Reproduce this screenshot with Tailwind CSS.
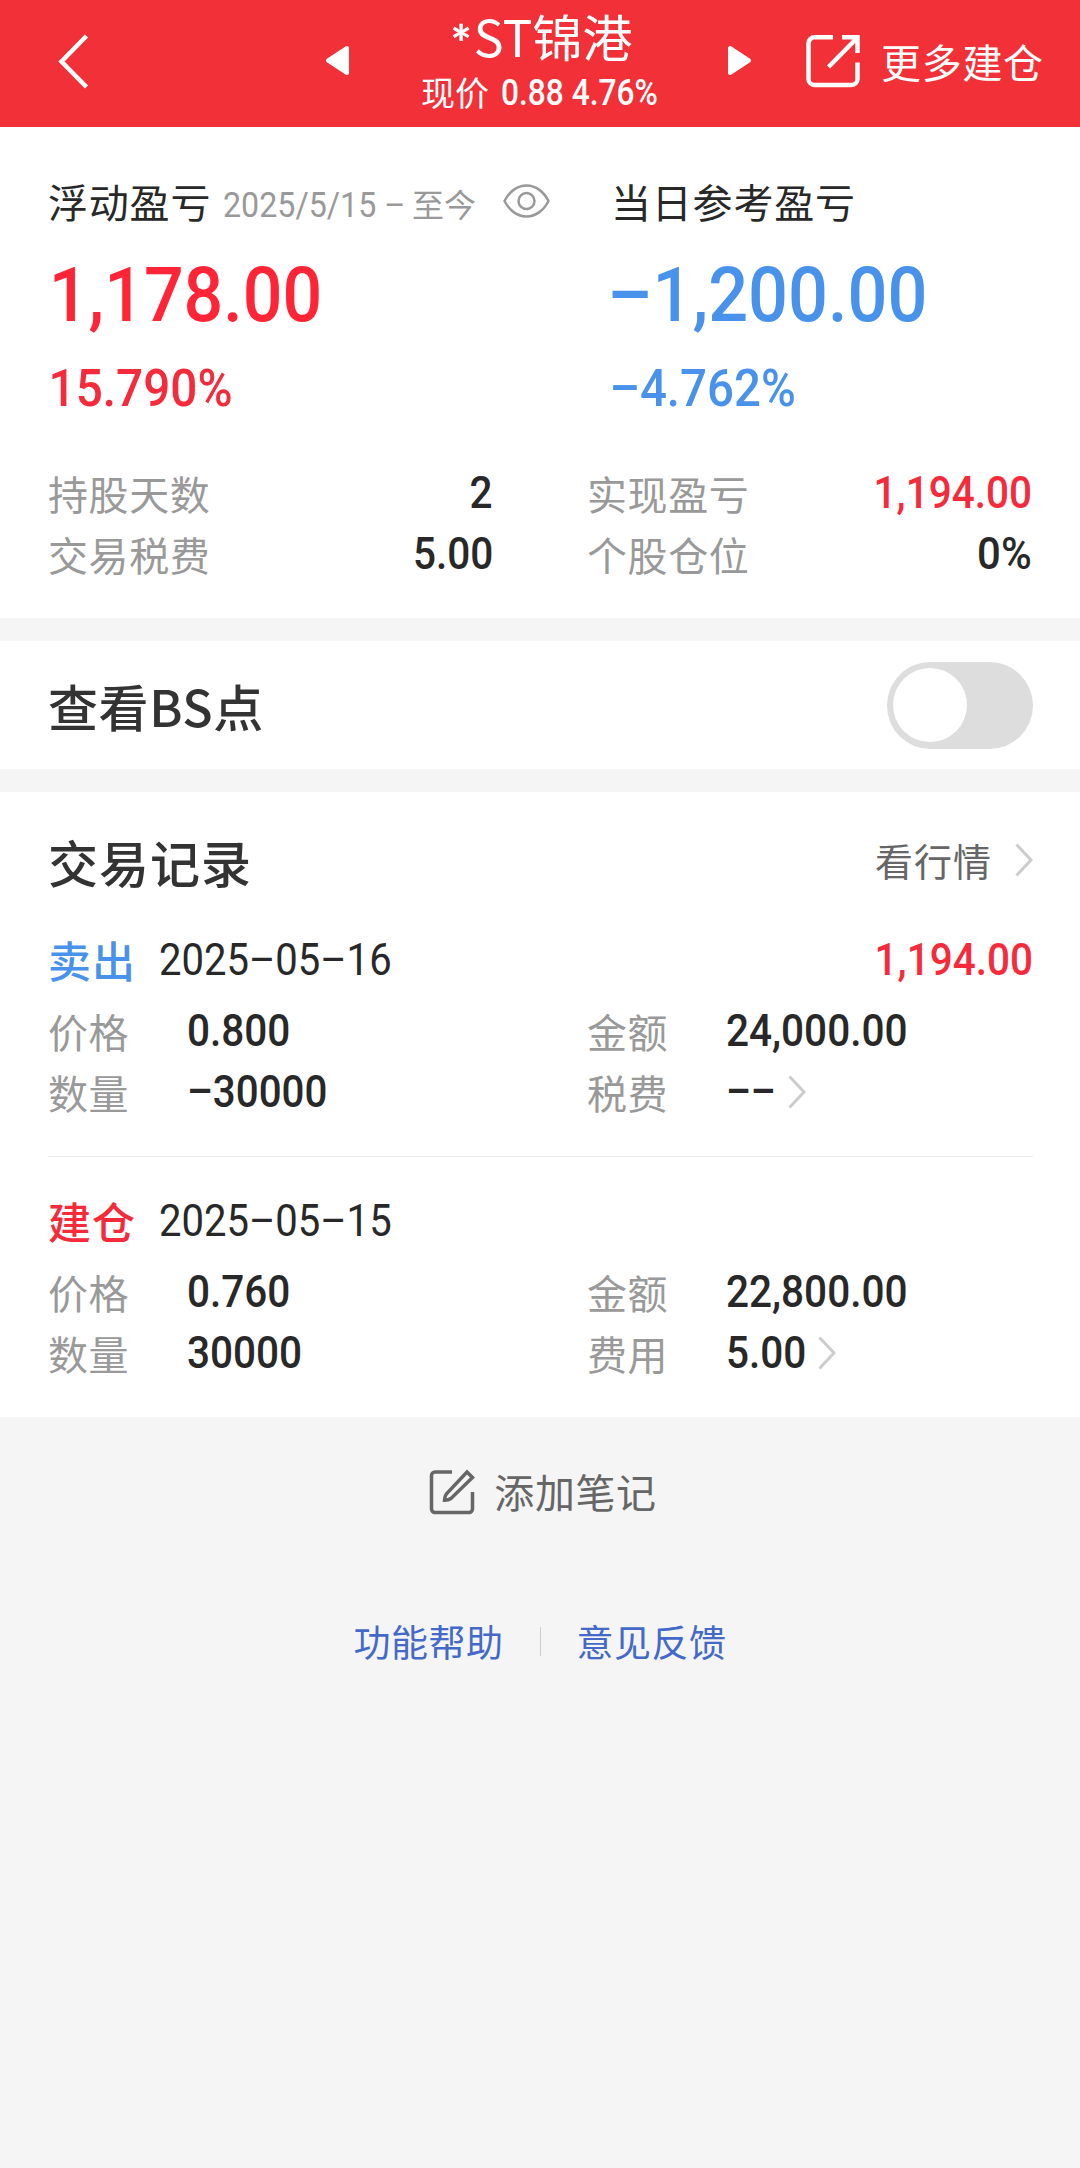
<!DOCTYPE html>
<html lang="zh-CN">
<head>
    <meta charset="UTF-8">
    <title>*ST锦港</title>
    <script src="https://cdn.jsdelivr.net/npm/@tailwindcss/browser@4"></script>
</head>
<body class="bg-[#f5f5f5] font-['Noto_Sans_CJK_SC',sans-serif] text-[40px] leading-none text-[#282828]">

<header class="h-[127px] bg-[#f23037] text-white flex items-center">
    <svg class="ml-[57px] -mt-1.5 w-8 h-14" viewBox="0 0 32 56" fill="none" stroke="currentColor" stroke-width="4.5"><path d="M29.500 3 4.500 28.500l25 25.500"/></svg>
    <svg class="ml-[236px] -mt-2 w-6 h-8" viewBox="0 0 24 32" fill="currentColor" stroke="currentColor" stroke-width="4" stroke-linejoin="round"><path d="M22 4v25L3 16.500z"/></svg>
    <div class="w-[379px] h-full flex flex-col items-center">
        <h1 class="mt-2.5 h-[51px] leading-[51px] text-[50px] pl-1.5 flex"><span class="font-['Lato'] text-[50px] font-black pt-2 mr-0.5">*</span>ST锦港</h1>
        <p class="h-[62px] leading-[62px] text-[34px] flex items-center whitespace-nowrap">现价<span class="ml-3 mt-0.5 font-['Roboto'] font-medium text-[36px] inline-block scale-x-[0.88] origin-left w-[155px]">0.88 4.76%</span></p>
    </div>
    <svg class="-mt-2 w-6 h-8" viewBox="0 0 24 32" fill="currentColor" stroke="currentColor" stroke-width="4" stroke-linejoin="round"><path d="M2 4v25l19-12.500z"/></svg>
    <svg class="ml-[53px] -mt-1.5 w-14 h-14" viewBox="0 0 56 56" fill="none" stroke="currentColor" stroke-width="4.500"><path d="M28 4.300H9.500a6 6 0 0 0-6 6V46a6 6 0 0 0 6 6h37a6 6 0 0 0 6-6V29.500M37 4.300h15.500V20M52 5 23.500 34"/></svg>
    <span class="ml-5 -mt-1.5 tracking-[0.7px]">更多建仓</span>
</header>

<section class="h-[491px] bg-white">
    <div class="flex h-[149px] pt-[50px]">
        <div class="w-[564px] pl-12 flex h-12 items-center">
            <span class="tracking-[0.8px] w-[175px]">浮动盈亏</span>
            <span class="font-['Roboto'] text-[35px] text-[#999] w-[189px] mt-2 whitespace-nowrap inline-block scale-x-[0.92] origin-left">2025/5/15 –</span>
            <span class="text-[32px] text-[#999] mt-1">至今</span>
            <svg class="ml-auto mr-3.5 w-[47px] h-[34px]" viewBox="0 0 47 34" fill="none" stroke="#999" stroke-width="2.500"><path d="M1.500 17C6 8 14 1.500 23.500 1.500S41 8 45.500 17C41 26 33 32.500 23.500 32.500S6 26 1.500 17z"/><circle cx="23.500" cy="17" r="8"/></svg>
        </div>
        <span class="ml-[47px] h-12 leading-[48px] tracking-[0.8px]">当日参考盈亏</span>
    </div>
    <div class="flex -mt-[23px] h-[84px] items-center font-['Roboto'] font-medium text-[76px]">
        <span class="w-[562px] pl-[53px] text-[#ff2436] scale-x-[0.92] origin-left">1,178.00</span>
        <span class="pl-[49px] text-[#4892eb] scale-x-[0.925] origin-left">–1,200.00</span>
    </div>
    <div class="flex mt-[21px] h-[60px] items-center font-['Roboto'] font-medium text-[51px]">
        <span class="w-[562px] pl-[52px] text-[#f52b3b] scale-x-[0.935] origin-left">15.790%</span>
        <span class="pl-[51px] text-[#4892eb] scale-x-[0.93] origin-left">–4.762%</span>
    </div>
    <div class="mt-11 grid grid-cols-[445px_445px] gap-x-[94px] px-12 text-[#999] tracking-[0.6px]">
        <div class="h-[61px] flex items-center justify-between">持股天数<span class="font-['Roboto'] font-medium text-[45px] text-[#282828] tracking-normal scale-x-[0.9] origin-right">2</span></div>
        <div class="h-[61px] flex items-center justify-between">实现盈亏<span class="font-['Roboto'] font-medium text-[45px] text-[#f52b3b] tracking-normal scale-x-[0.9] origin-right">1,194.00</span></div>
        <div class="h-[61px] flex items-center justify-between">交易税费<span class="font-['Roboto'] font-medium text-[45px] text-[#282828] tracking-normal scale-x-[0.9] origin-right">5.00</span></div>
        <div class="h-[61px] flex items-center justify-between">个股仓位<span class="font-['Roboto'] font-medium text-[45px] text-[#282828] tracking-normal scale-x-[0.93] origin-right">0%</span></div>
    </div>
</section>

<section class="mt-[23px] h-32 bg-white flex items-center justify-between pl-12 pr-[47px]">
    <h2 class="text-[50px] font-medium text-[#333] tracking-[0.6px]">查看BS点</h2>
    <button type="button" class="w-[146px] h-[87px] rounded-full bg-[#ddd] pl-1.5 flex items-center"><span class="w-[74px] h-[74px] rounded-full bg-white"></span></button>
</section>

<section class="mt-[23px] h-[625px] bg-white pl-12 pr-[47px] pt-[37px]">
    <div class="h-16 flex items-center">
        <h2 class="text-[50px] font-medium text-[#333] tracking-[1px]">交易记录</h2>
        <span class="ml-auto -mt-0.5 text-[38px] text-[#666] tracking-[1px]">看行情</span>
        <svg class="ml-[23px] -mt-0.5 w-[18px] h-[34px]" viewBox="0 0 18 34" fill="none" stroke="#ccc" stroke-width="3"><path d="M1.500 1.500 16 17 1.500 32.500"/></svg>
    </div>

    <!-- 卖出 -->
    <div class="mt-[34px] h-16 flex items-center">
        <span class="w-[111px] text-[43px] font-medium text-[#4892eb] tracking-[1px]">卖出</span>
        <span class="font-['Roboto'] text-[45px] scale-x-[0.89] origin-left">2025–05–16</span>
        <span class="ml-auto font-['Roboto'] font-medium text-[45px] text-[#f52b3b] scale-x-[0.9] origin-right">1,194.00</span>
    </div>
    <div class="mt-[9px] grid grid-cols-[539px_1fr] text-[#999] tracking-[0.6px]">
        <div class="h-[61px] flex items-center"><span class="w-[139px]">价格</span><span class="font-['Roboto'] font-medium text-[45px] text-[#282828] tracking-normal scale-x-[0.9] origin-left">0.800</span></div>
        <div class="h-[61px] flex items-center"><span class="w-[139px]">金额</span><span class="font-['Roboto'] font-medium text-[45px] text-[#282828] tracking-normal scale-x-[0.9] origin-left">24,000.00</span></div>
        <div class="h-[61px] flex items-center"><span class="w-[139px]">数量</span><span class="font-['Roboto'] font-medium text-[45px] text-[#282828] tracking-normal scale-x-[0.895] origin-left">–30000</span></div>
        <div class="h-[61px] flex items-center"><span class="w-[139px]">税费</span><span class="w-[62px] font-['Roboto'] font-medium text-[45px] text-[#282828] tracking-normal scale-x-[0.86] origin-left">––</span><svg class="w-[18px] h-[34px]" viewBox="0 0 18 34" fill="none" stroke="#ccc" stroke-width="3"><path d="M1.500 1.500 16 17 1.500 32.500"/></svg></div>
    </div>

    <div class="mt-[34px] border-t border-[#ebebeb]"></div>

    <!-- 建仓 -->
    <div class="mt-[31px] h-16 flex items-center">
        <span class="w-[111px] text-[43px] font-medium text-[#f52b3b] tracking-[1px]">建仓</span>
        <span class="font-['Roboto'] text-[45px] scale-x-[0.89] origin-left">2025–05–15</span>
    </div>
    <div class="mt-[9px] grid grid-cols-[539px_1fr] text-[#999] tracking-[0.6px]">
        <div class="h-[61px] flex items-center"><span class="w-[139px]">价格</span><span class="font-['Roboto'] font-medium text-[45px] text-[#282828] tracking-normal scale-x-[0.9] origin-left">0.760</span></div>
        <div class="h-[61px] flex items-center"><span class="w-[139px]">金额</span><span class="font-['Roboto'] font-medium text-[45px] text-[#282828] tracking-normal scale-x-[0.9] origin-left">22,800.00</span></div>
        <div class="h-[61px] flex items-center"><span class="w-[139px]">数量</span><span class="font-['Roboto'] font-medium text-[45px] text-[#282828] tracking-normal scale-x-[0.9] origin-left">30000</span></div>
        <div class="h-[61px] flex items-center"><span class="w-[139px]">费用</span><span class="w-[92px] font-['Roboto'] font-medium text-[45px] text-[#282828] tracking-normal scale-x-[0.9] origin-left">5.00</span><svg class="w-[18px] h-[34px]" viewBox="0 0 18 34" fill="none" stroke="#ccc" stroke-width="3"><path d="M1.500 1.500 16 17 1.500 32.500"/></svg></div>
    </div>
</section>

<div class="mt-[45px] h-[60px] pl-1.5 flex items-center justify-center text-[#666] tracking-[0.6px]">
    <svg class="mr-[19px] w-[46px] h-[46px]" viewBox="0 0 46 46" fill="none" stroke="#666" stroke-width="3.500"><path d="M23 3H6a3.500 3.500 0 0 0-3.500 3.500V40A3.500 3.500 0 0 0 6 43.500h34a3.500 3.500 0 0 0 3.500-3.500V23"/><path d="M38 3 43.500 8.500 22 29.500c-2 1.500-4 1.800-6.500 1.800 0-2.500.5-4.500 2-6.500z"/></svg>
    <span class="-mt-0.5">添加笔记</span>
</div>

<footer class="mt-[89px] h-[60px] flex items-center justify-center text-[37px] text-[#4469c8] tracking-[0.5px]">
    <a>功能帮助</a>
    <i class="mx-9 w-px h-[29px] bg-[#ccc]"></i>
    <a>意见反馈</a>
</footer>

</body>
</html>
